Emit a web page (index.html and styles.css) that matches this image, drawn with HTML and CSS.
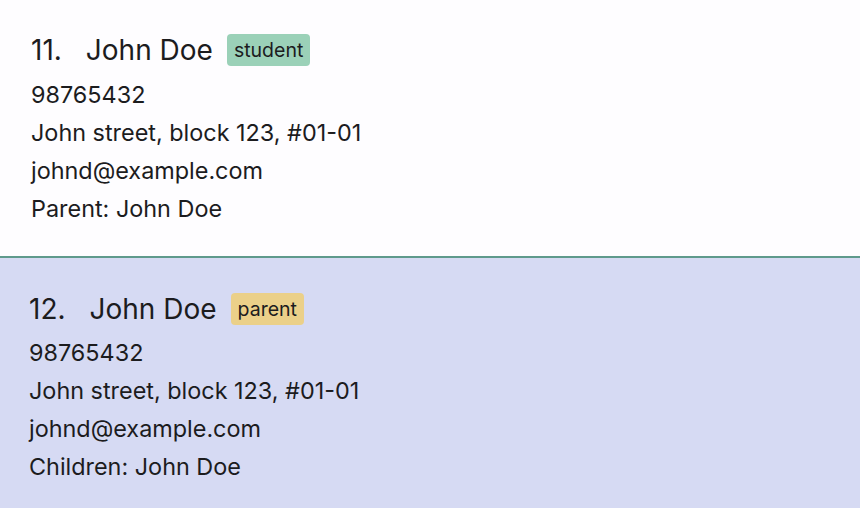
FILE: index.html
```html
<!DOCTYPE html>
<html>
<head>
<meta charset="utf-8">
<link rel="stylesheet" href="styles.css">
</head>
<body>
<div class="list">
  <div class="card card-odd">
    <div class="title">
      <span class="idx">11.</span>
      <span class="name">John Doe</span>
      <span class="tag tag-student">student</span>
    </div>
    <div class="line">98765432</div>
    <div class="line">John street, block 123, #01-01</div>
    <div class="line">johnd@example.com</div>
    <div class="line">Parent: John Doe</div>
  </div>
  <div class="card card-even">
    <div class="title">
      <span class="idx">12.</span>
      <span class="name">John Doe</span>
      <span class="tag tag-parent">parent</span>
    </div>
    <div class="line">98765432</div>
    <div class="line">John street, block 123, #01-01</div>
    <div class="line">johnd@example.com</div>
    <div class="line">Children: John Doe</div>
  </div>
</div>
</body>
</html>
```
FILE: styles.css
```css
html, body {
  margin: 0;
  padding: 0;
  width: 860px;
  height: 508px;
  overflow: hidden;
  font-family: Inter, "Noto Sans", sans-serif;
  color: #1c1c1e;
}
.list {
  display: flex;
  flex-direction: column;
}
.card {
  box-sizing: border-box;
}
.card-odd {
  background: #fefdff;
  border-bottom: 2px solid #5f9a8c;
  height: 258px;
  padding: 31px 0 0 31px;
}
.card-even {
  background: #d6daf3;
  height: 250px;
  padding: 32px 0 0 29px;
}
.title {
  display: flex;
  align-items: center;
  height: 38px;
  font-size: 28px;
  margin-bottom: 7px;
}
.card-even .title {
  margin-bottom: 6px;
}
.idx {
  margin-right: 24px;
}
.name {
  margin-right: 14px;
}
.tag {
  font-size: 19.5px;
  padding: 3px 7px;
  border-radius: 4px;
  line-height: 26px;
}
.tag-student { background: #9bd1b8; }
.tag-parent { background: #ebd089; }
.line {
  font-size: 23.4px;
  line-height: 38px;
}
```
